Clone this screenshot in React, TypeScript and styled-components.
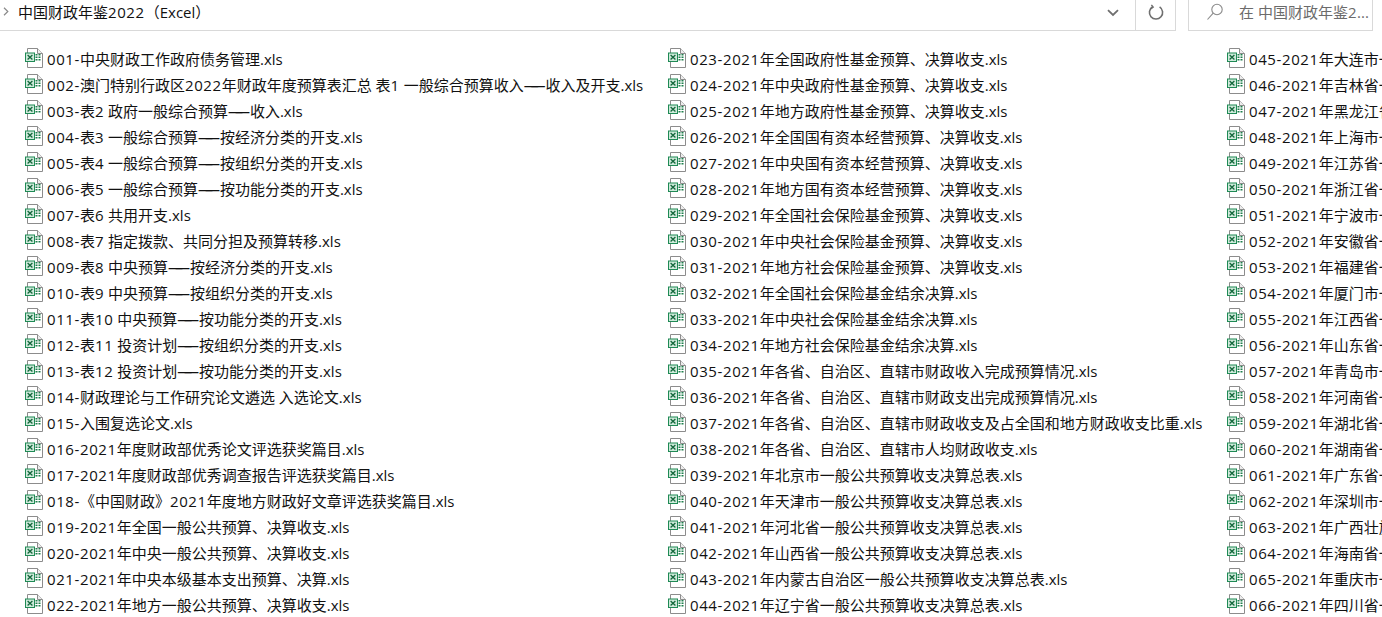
import styled, { createGlobalStyle } from "styled-components";

const col1 = [
  "001-中央财政工作政府债务管理.xls",
  "002-澳门特别行政区2022年财政年度预算表汇总 表1 一般综合预算收入——收入及开支.xls",
  "003-表2 政府一般综合预算——收入.xls",
  "004-表3 一般综合预算——按经济分类的开支.xls",
  "005-表4 一般综合预算——按组织分类的开支.xls",
  "006-表5 一般综合预算——按功能分类的开支.xls",
  "007-表6 共用开支.xls",
  "008-表7 指定拨款、共同分担及预算转移.xls",
  "009-表8 中央预算——按经济分类的开支.xls",
  "010-表9 中央预算——按组织分类的开支.xls",
  "011-表10 中央预算——按功能分类的开支.xls",
  "012-表11 投资计划——按组织分类的开支.xls",
  "013-表12 投资计划——按功能分类的开支.xls",
  "014-财政理论与工作研究论文遴选 入选论文.xls",
  "015-入围复选论文.xls",
  "016-2021年度财政部优秀论文评选获奖篇目.xls",
  "017-2021年度财政部优秀调查报告评选获奖篇目.xls",
  "018-《中国财政》2021年度地方财政好文章评选获奖篇目.xls",
  "019-2021年全国一般公共预算、决算收支.xls",
  "020-2021年中央一般公共预算、决算收支.xls",
  "021-2021年中央本级基本支出预算、决算.xls",
  "022-2021年地方一般公共预算、决算收支.xls",
];

const col2 = [
  "023-2021年全国政府性基金预算、决算收支.xls",
  "024-2021年中央政府性基金预算、决算收支.xls",
  "025-2021年地方政府性基金预算、决算收支.xls",
  "026-2021年全国国有资本经营预算、决算收支.xls",
  "027-2021年中央国有资本经营预算、决算收支.xls",
  "028-2021年地方国有资本经营预算、决算收支.xls",
  "029-2021年全国社会保险基金预算、决算收支.xls",
  "030-2021年中央社会保险基金预算、决算收支.xls",
  "031-2021年地方社会保险基金预算、决算收支.xls",
  "032-2021年全国社会保险基金结余决算.xls",
  "033-2021年中央社会保险基金结余决算.xls",
  "034-2021年地方社会保险基金结余决算.xls",
  "035-2021年各省、自治区、直辖市财政收入完成预算情况.xls",
  "036-2021年各省、自治区、直辖市财政支出完成预算情况.xls",
  "037-2021年各省、自治区、直辖市财政收支及占全国和地方财政收支比重.xls",
  "038-2021年各省、自治区、直辖市人均财政收支.xls",
  "039-2021年北京市一般公共预算收支决算总表.xls",
  "040-2021年天津市一般公共预算收支决算总表.xls",
  "041-2021年河北省一般公共预算收支决算总表.xls",
  "042-2021年山西省一般公共预算收支决算总表.xls",
  "043-2021年内蒙古自治区一般公共预算收支决算总表.xls",
  "044-2021年辽宁省一般公共预算收支决算总表.xls",
];

const col3 = [
  "045-2021年大连市一般公共预算收支决算总表.xls",
  "046-2021年吉林省一般公共预算收支决算总表.xls",
  "047-2021年黑龙江省一般公共预算收支决算总表.xls",
  "048-2021年上海市一般公共预算收支决算总表.xls",
  "049-2021年江苏省一般公共预算收支决算总表.xls",
  "050-2021年浙江省一般公共预算收支决算总表.xls",
  "051-2021年宁波市一般公共预算收支决算总表.xls",
  "052-2021年安徽省一般公共预算收支决算总表.xls",
  "053-2021年福建省一般公共预算收支决算总表.xls",
  "054-2021年厦门市一般公共预算收支决算总表.xls",
  "055-2021年江西省一般公共预算收支决算总表.xls",
  "056-2021年山东省一般公共预算收支决算总表.xls",
  "057-2021年青岛市一般公共预算收支决算总表.xls",
  "058-2021年河南省一般公共预算收支决算总表.xls",
  "059-2021年湖北省一般公共预算收支决算总表.xls",
  "060-2021年湖南省一般公共预算收支决算总表.xls",
  "061-2021年广东省一般公共预算收支决算总表.xls",
  "062-2021年深圳市一般公共预算收支决算总表.xls",
  "063-2021年广西壮族自治区一般公共预算收支决算总表.xls",
  "064-2021年海南省一般公共预算收支决算总表.xls",
  "065-2021年重庆市一般公共预算收支决算总表.xls",
  "066-2021年四川省一般公共预算收支决算总表.xls",
];

const ExcelIcon = () => (
  <IconSvg width="19" height="20" viewBox="0 0 19 20" fill="none">
    <path d="M3.5 .5H13.5L18.5 5.5V19.5H3.5Z" fill="#fff" stroke="#8c8c8c" />
    <path d="M13.5 .5V5.5H18.5" fill="#ededed" stroke="#8c8c8c" />
    <rect x="11.5" y="6" width="2" height="1.5" fill="#1f7f4c" />
    <rect x="14.5" y="6" width="2" height="1.5" fill="#1f7f4c" />
    <rect x="11.5" y="8.5" width="2" height="1.5" fill="#1f7f4c" />
    <rect x="14.5" y="8.5" width="2" height="1.5" fill="#1f7f4c" />
    <rect x="11.5" y="11" width="2" height="1.5" fill="#1f7f4c" />
    <rect x="14.5" y="11" width="2" height="1.5" fill="#1f7f4c" />
    <rect x="1.5" y="5" width="9" height="8.5" fill="#cfeadb" stroke="#1f8a55" />
    <path d="M3.6 7L8.4 11.5M8.4 7L3.6 11.5" stroke="#14683c" strokeWidth="1.3" />
  </IconSvg>
);

const SearchGlyph = () => (
  <IconSvg width="18" height="18" viewBox="0 0 18 18" fill="none" stroke="#8a8a8a" strokeWidth="1.1">
    <circle cx="11" cy="6.5" r="5.2" />
    <path d="M7.2 10.2L1.5 16.5" />
  </IconSvg>
);

const RefreshGlyph = () => (
  <IconSvg width="16" height="17" viewBox="0 0 16 17" fill="none" stroke="#6f6f6f" strokeWidth="1.6">
    <path d="M4.6 2.8A6.6 6.6 0 1 0 11.6 2.9" />
    <path d="M3.4 .8L5.2 3.2L2.6 5" strokeWidth="1.4" />
  </IconSvg>
);

const ChevronGlyph = () => (
  <IconSvg width="12" height="8" viewBox="0 0 12 8" fill="none" stroke="#6f6f6f" strokeWidth="1.8">
    <path d="M1 1.2L6 6L11 1.2" />
  </IconSvg>
);

const BreadcrumbArrow = () => (
  <IconSvg width="6" height="9" viewBox="0 0 6 9" fill="none" stroke="#8a8a8a" strokeWidth="1.2">
    <path d="M1 .8L4.8 4.5L1 8.2" />
  </IconSvg>
);

// digits and long dashes have other widths in the original font
const Label = ({ text }: { text: string }) => (
  <>
    {text.split(/(——|\d+-?)/).map((part, i) => {
      if (part === "——") return <Dash key={i}>{part}</Dash>;
      if (/^\d/.test(part)) return <Num key={i}>{part}</Num>;
      return part;
    })}
  </>
);

export default function App() {
  return (
    <Window>
      <GlobalStyle />
      <Header>
        <PathBar>
          <PathLabel>
            <BreadcrumbArrow />
            <PathTitle>
              <Label text="中国财政年鉴2022（Excel）" />
            </PathTitle>
          </PathLabel>
          <DropButton>
            <ChevronGlyph />
          </DropButton>
          <RefreshButton>
            <RefreshGlyph />
          </RefreshButton>
        </PathBar>
        <SearchBox>
          <SearchGlyph />
          <SearchHint>
            <Label text="在 中国财政年鉴2..." />
          </SearchHint>
        </SearchBox>
      </Header>
      <FileGrid>
        {[col1, col2, col3].map((files, i) => (
          <FileColumn key={i}>
            {files.map(name => (
              <FileRow key={name}>
                <ExcelIcon />
                <FileName>
                  <Label text={name} />
                </FileName>
              </FileRow>
            ))}
          </FileColumn>
        ))}
      </FileGrid>
    </Window>
  );
}

const GlobalStyle = createGlobalStyle`
  html, body {
    margin: 0;
    padding: 0;
    background: #fff;
    overflow: hidden;
  }
`;

const Window = styled.div`
  width: 1382px;
  height: 617px;
  overflow: hidden;
  background: #fff;
  color: #111;
  font-family: "Open Sans", "Noto Sans CJK SC", sans-serif;
  font-size: 15px;
`;

const IconSvg = styled.svg`
  flex-shrink: 0;
`;

const Header = styled.div`
  display: flex;
  height: 31px;
`;

const PathBar = styled.div`
  flex: 1;
  display: flex;
  border-bottom: 1px solid #d9d9d9;
  border-right: 1px solid #d9d9d9;
`;

const PathLabel = styled.div`
  flex: 1;
  display: flex;
  align-items: center;
  padding: 0 0 7px 3px;
`;

const PathTitle = styled.div`
  margin-left: 9px;
`;

const DropButton = styled.div`
  width: 54px;
  display: flex;
  justify-content: center;
  padding: 9px 0 0 8px;
  box-sizing: border-box;
  border-right: 1px solid #d9d9d9;
`;

const RefreshButton = styled.div`
  width: 39px;
  display: flex;
  justify-content: center;
  padding-top: 4px;
  box-sizing: border-box;
`;

const SearchBox = styled.div`
  width: 185px;
  margin-left: 12px;
  margin-right: 9px;
  display: flex;
  align-items: center;
  padding: 0 0 7px 17px;
  box-sizing: border-box;
  border: 1px solid #d9d9d9;
  border-top: none;
`;

const SearchHint = styled.div`
  margin-left: 15px;
  color: #6b6b6b;
  white-space: nowrap;
`;

const FileGrid = styled.div`
  display: grid;
  grid-template-columns: 643px 559px 1fr;
  padding: 14px 0 0 24px;
`;

const FileColumn = styled.div`
  display: flex;
  flex-direction: column;
  min-width: 0;
  overflow: hidden;
`;

const FileRow = styled.div`
  display: flex;
  align-items: center;
  height: 26px;
`;

const FileName = styled.div`
  margin-left: 4px;
  white-space: nowrap;
`;

const Num = styled.span`
  letter-spacing: 0.6px;
`;

const Dash = styled.span`
  letter-spacing: -8.2px;
  margin-right: 8.2px;
`;
